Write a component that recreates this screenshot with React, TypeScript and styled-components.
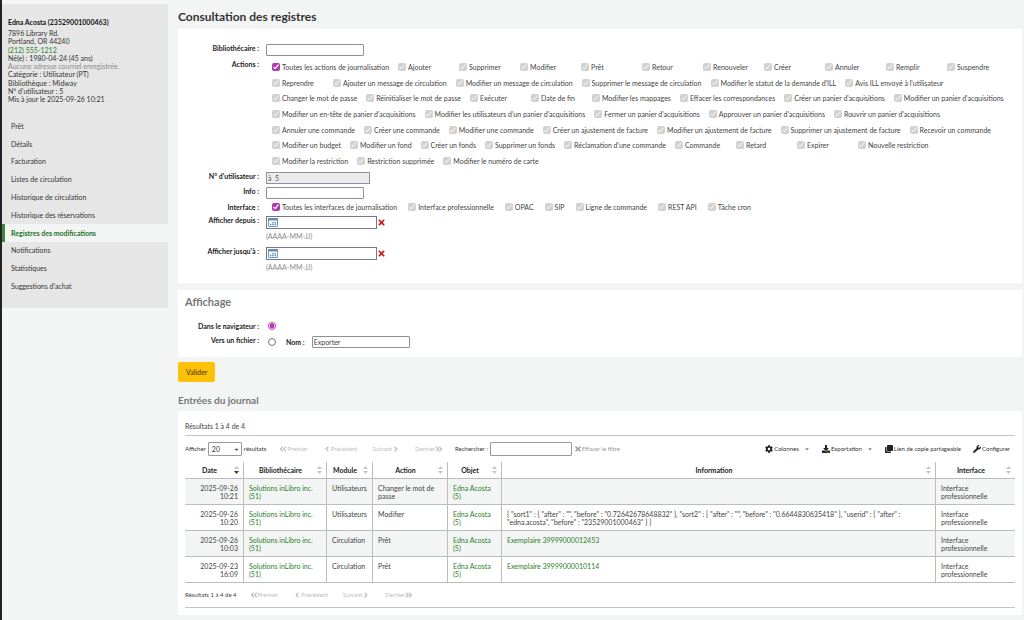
import React from 'react';
import styled, { createGlobalStyle } from 'styled-components';
import {
  FaAngleDoubleLeft,
  FaAngleDoubleRight,
  FaAngleLeft,
  FaAngleRight,
  FaCaretDown,
  FaClone,
  FaCog,
  FaDownload,
  FaTimes,
  FaWrench,
} from 'react-icons/fa';

const GlobalStyle = createGlobalStyle`
  *, *::before, *::after { box-sizing: border-box; }
  body {
    margin: 0;
    background: #f3f4f4;
    color: #444;
    font-family: Lato, "Noto Sans", sans-serif;
    font-size: 7px;
    line-height: 8px;
  }
  input, select, button { font: inherit; color: inherit; margin: 0; }
  a { color: #2a7f2a; text-decoration: none; }
  h1, h2, p, ul { margin: 0; padding: 0; }
  ul { list-style: none; }
`;

const Page = styled.div`
  display: flex;
  align-items: flex-start;
  min-height: 100vh;
  padding: 4px 2px 5px 0;
  border-left: 2px solid #222;
`;

const Sidebar = styled.aside`
  flex: 0 0 166px;
  padding: 14px 0 13px;
  background: #e6e6e6;
`;

const PatronName = styled.h2`
  padding: 0 6px;
  font-size: 7px;
  line-height: 8px;
  font-weight: 700;
  color: #111;
`;

const PatronInfo = styled.ul`
  display: flex;
  flex-direction: column;
  justify-content: space-between;
  min-height: 74px;
  margin: 3px 0 14px;
  padding: 0 6px;
  color: #333;
`;

const Muted = styled.li`
  color: #8c8c8c;
`;

const Nav = styled.nav`
  display: flex;
  flex-direction: column;
  min-height: 178px;
`;

const NavLink = styled.a<{ $active?: boolean }>`
  display: flex;
  flex: 1;
  align-items: center;
  padding-left: 6px;
  border-left: 3px solid ${(p) => (p.$active ? '#418940' : 'transparent')};
  background: ${(p) => (p.$active ? '#f3f4f4' : 'transparent')};
  color: ${(p) => (p.$active ? '#1a7326' : '#333')};
  font-weight: ${(p) => (p.$active ? 700 : 400)};
`;

const Main = styled.main`
  flex: 1;
  min-width: 0;
  margin-left: 10px;
`;

const PageTitle = styled.h1`
  padding: 6px 0 5px;
  font-size: 12px;
  line-height: 14px;
  font-weight: 700;
  color: #333;
`;

const SectionTitle = styled.h2`
  font-size: 10px;
  line-height: 12px;
  font-weight: 700;
  color: #777;
`;

const DisplayTitle = styled(SectionTitle)`
  padding: 0 7px 14px;
  font-size: 11px;
`;

const Panel = styled.section`
  background: #fff;
`;

const FilterPanel = styled(Panel)`
  padding: 15px 0 4px;
`;

const DisplayPanel = styled(Panel)`
  margin-top: 7px;
  padding: 6px 0 5px;
`;

const LogPanel = styled(Panel)`
  margin-top: 5px;
  padding: 11px 7px 7px;
`;

const Row = styled.div<{ $height: number }>`
  display: flex;
  align-items: flex-start;
  gap: 7px;
  min-height: ${(p) => p.$height}px;
`;

const RowLabel = styled.label`
  flex: 0 0 81px;
  text-align: right;
  font-weight: 700;
  color: #222;
`;

const TextInput = styled.input<{ $width?: number }>`
  width: ${(p) => p.$width ?? 98}px;
  height: 12px;
  padding: 0 1px;
  border: 1px solid #8f8f9d;
  border-radius: 1px;
  background: #fff;

  &:disabled {
    background: #ececec;
    color: #555;
    border-radius: 0;
  }
`;

const ActionRows = styled.div`
  display: flex;
  flex-direction: column;
  justify-content: space-between;
  min-height: 102px;
  margin-top: 3px;
`;

const CheckRow = styled.div`
  display: flex;
  padding-left: 6px;
`;

const CheckItem = styled.label<{ $compact?: boolean }>`
  display: flex;
  align-items: center;
  gap: 2px;
  height: 8px;
  min-width: ${(p) => (p.$compact ? 0 : 61)}px;
  padding-right: ${(p) => (p.$compact ? 11 : 9)}px;
  white-space: nowrap;
`;

const CheckBox = styled.input`
  flex: none;
  width: 8px;
  height: 8px;
  accent-color: #b03ab0;
`;

const DateField = styled.div`
  display: flex;
  flex-direction: column;
  gap: 3px;
`;

const DateLine = styled.div`
  display: flex;
  align-items: center;
`;

const DateBox = styled.div`
  display: flex;
  align-items: center;
  width: 111px;
  height: 13px;
  padding-left: 1px;
  border: 1px solid #777783;
  background: #fff;
`;

const BareInput = styled.input`
  flex: 1;
  min-width: 0;
  height: 10px;
  padding: 0 2px;
  border: 0;
  background: transparent;
`;

const ClearButton = styled.button`
  display: flex;
  padding: 0;
  border: 0;
  background: none;
  color: #d01c1c;
  font-size: 9px;
`;

const Hint = styled.span`
  color: #8c8c8c;
`;

const RadioLine = styled.div`
  display: flex;
  align-items: center;
  gap: 10px;
  padding-left: 2px;
`;

const Radio = styled.input`
  flex: none;
  width: 8px;
  height: 8px;
  accent-color: #b03ab0;
`;

const NameLabel = styled.label`
  display: flex;
  align-items: center;
  gap: 7px;
  font-weight: 700;
  color: #222;

  input { font-weight: 400; color: #444; }
`;

const Submit = styled.button`
  display: block;
  height: 20px;
  margin: 5px 0 12px;
  padding: 0 8px;
  border: 0;
  border-radius: 2px;
  background: #ffc107;
  color: #3a2d00;
`;

const Toolbar = styled.div`
  display: flex;
  align-items: center;
  height: 27px;
  margin-top: 5px;
  border-top: 1px solid #c4c4c4;
  font-size: 6px;
`;

const SizeLabel = styled.label`
  display: flex;
  align-items: center;
  gap: 2px;
  color: #333;
`;

const SelectWrap = styled.span`
  display: grid;
  align-items: center;

  > * { grid-area: 1 / 1; }
  svg { justify-self: end; margin-right: 2px; font-size: 7px; color: #555; pointer-events: none; }
`;

const SizeSelect = styled.select`
  appearance: none;
  width: 34px;
  height: 14px;
  padding: 0 3px;
  border: 1px solid #999;
  border-radius: 1px;
  background: #fff;
  font-size: 7px;
`;

const Pager = styled.div`
  display: flex;
  gap: 15px;
  margin-left: 13px;
`;

const PageButton = styled.button`
  display: flex;
  align-items: center;
  padding: 0;
  border: 0;
  background: none;
  color: #bdbdbd;

  svg { font-size: 8px; }
`;

const SearchLabel = styled.label`
  display: flex;
  align-items: center;
  gap: 2px;
  margin-left: 12px;
  color: #333;
`;

const SearchInput = styled.input`
  width: 82px;
  height: 14px;
  padding: 0 2px;
  border: 1px solid #999;
  border-radius: 1px;
`;

const ClearFilter = styled(PageButton)`
  margin-left: 2px;
  color: #999;
`;

const Tools = styled.div`
  display: flex;
  gap: 12px;
  margin-left: auto;
  padding-right: 5px;
`;

const ToolButton = styled.button`
  display: flex;
  align-items: center;
  gap: 1px;
  padding: 0;
  border: 0;
  background: none;
  color: #333;

  > svg { font-size: 8px; color: #222; }
`;

const ToolCaret = styled.span`
  display: flex;
  margin-left: 4px;

  svg { font-size: 6px; color: #888; }
`;

const LogTable = styled.table`
  width: 100%;
  table-layout: fixed;
  border-collapse: separate;
  border-spacing: 0;

  th, td {
    border-bottom: 1px solid #bcbcbc;
    border-right: 1px solid #bcbcbc;
  }
  th:last-child, td:last-child { border-right: 0; }
  tbody tr:nth-child(odd) { background: #f3f4f4; }
`;

const Col = styled.col<{ $width?: number }>`
  width: ${(p) => (p.$width ? `${p.$width}px` : 'auto')};
`;

const Th = styled.th`
  height: 17px;
  padding: 0 4px 0 0;
  color: #222;
  font-weight: 700;
`;

const ThInner = styled.div`
  display: flex;
  align-items: center;

  span { flex: 1; text-align: center; }
`;

const Td = styled.td<{ $align?: 'right' }>`
  height: 26px;
  padding: 5px 5px 4px;
  vertical-align: top;
  text-align: ${(p) => p.$align ?? 'left'};
`;

const Footer = styled.div`
  display: flex;
  align-items: center;
  height: 25px;
  border-bottom: 1px solid #c4c4c4;
  font-size: 6px;
`;

const ACTIONS: string[][] = [
  ['Toutes les actions de journalisation', 'Ajouter', 'Supprimer', 'Modifier', 'Prêt', 'Retour', 'Renouveler', 'Créer', 'Annuler', 'Remplir', 'Suspendre'],
  ['Reprendre', 'Ajouter un message de circulation', 'Modifier un message de circulation', 'Supprimer le message de circulation', "Modifier le statut de la demande d'ILL", "Avis ILL envoyé à l'utilisateur"],
  ['Changer le mot de passe', 'Réinitialiser le mot de passe', 'Exécuter', 'Date de fin', 'Modifier les mappages', 'Effacer les correspondances', "Créer un panier d'acquisitions", "Modifier un panier d'acquisitions"],
  ["Modifier un en-tête de panier d'acquisitions", "Modifier les utilisateurs d'un panier d'acquisitions", "Fermer un panier d'acquisitions", "Approuver un panier d'acquisitions", "Rouvrir un panier d'acquisitions"],
  ['Annuler une commande', 'Créer une commande', 'Modifier une commande', 'Créer un ajustement de facture', 'Modifier un ajustement de facture', 'Supprimer un ajustement de facture', 'Recevoir un commande'],
  ['Modifier un budget', 'Modifier un fond', 'Créer un fonds', 'Supprimer un fonds', "Réclamation d'une commande", 'Commande', 'Retard', 'Expirer', 'Nouvelle restriction'],
  ['Modifier la restriction', 'Restriction supprimée', 'Modifier le numéro de carte'],
];

const INTERFACES = ['Toutes les interfaces de journalisation', 'Interface professionnelle', 'OPAC', 'SIP', 'Ligne de commande', 'REST API', 'Tâche cron'];

const NAV = ['Prêt', 'Détails', 'Facturation', 'Listes de circulation', 'Historique de circulation', 'Historique des réservations', 'Registres des modifications', 'Notifications', 'Statistiques', "Suggestions d'achat"];

const COLUMNS: { name: string; width?: number }[] = [
  { name: 'Date', width: 59 },
  { name: 'Bibliothécaire', width: 83 },
  { name: 'Module', width: 46 },
  { name: 'Action', width: 75 },
  { name: 'Objet', width: 54 },
  { name: 'Information' },
  { name: 'Interface', width: 79 },
];

const ENTRIES: { day: string; time: string; module: string; action: string; item?: string; info?: string[] }[] = [
  { day: '2025-09-26', time: '10:21', module: 'Utilisateurs', action: 'Changer le mot de passe' },
  {
    day: '2025-09-26',
    time: '10:20',
    module: 'Utilisateurs',
    action: 'Modifier',
    info: [
      '{ "sort1" : { "after" : "", "before" : "0.72642678648832" }, "sort2" : { "after" : "", "before" : "0.6644830635418" }, "userid" : { "after" :',
      '"edna.acosta", "before" : "23529001000463" } }',
    ],
  },
  { day: '2025-09-26', time: '10:03', module: 'Circulation', action: 'Prêt', item: 'Exemplaire 39999000012453' },
  { day: '2025-09-23', time: '16:09', module: 'Circulation', action: 'Prêt', item: 'Exemplaire 39999000010114' },
];

function SortMark({ active }: { active?: boolean }) {
  return (
    <svg width="5" height="8" viewBox="0 0 5 8" aria-hidden="true">
      <path d="M0 3L2.5 0L5 3Z" fill="#c6c6c6" />
      <path d="M0 5L2.5 8L5 5Z" fill={active ? '#0f5c0f' : '#c6c6c6'} />
    </svg>
  );
}

function CalendarIcon() {
  return (
    <svg width="10" height="9" viewBox="0 0 10 9" aria-hidden="true">
      <rect x="0.5" y="0.5" width="9" height="8" rx="0.5" fill="#fff" stroke="#6f9ac0" />
      <rect x="0" y="0" width="10" height="2.5" fill="#5f8db5" />
      <path d="M2 5.8h1.3v1.4H2zM4.3 4h1.3v1.3H4.3zM4.3 5.8h1.3v1.4H4.3zM6.6 4h1.3v1.3H6.6zM6.6 5.8h1.3v1.4H6.6z" fill="#4a7aa5" />
    </svg>
  );
}

function Checks({ items, compact }: { items: string[]; compact?: boolean }) {
  return (
    <CheckRow>
      {items.map((text) => (
        <CheckItem key={text} $compact={compact}>
          <CheckBox type="checkbox" defaultChecked disabled={!text.startsWith('Toutes')} />
          {text}
        </CheckItem>
      ))}
    </CheckRow>
  );
}

function DateInput({ id }: { id: string }) {
  return (
    <DateField>
      <DateLine>
        <DateBox>
          <CalendarIcon />
          <BareInput id={id} type="text" />
        </DateBox>
        <ClearButton type="button" aria-label="Effacer la date">
          <FaTimes />
        </ClearButton>
      </DateLine>
      <Hint>(AAAA-MM-JJ)</Hint>
    </DateField>
  );
}

function Pagination() {
  return (
    <Pager>
      <PageButton type="button"><FaAngleDoubleLeft />Premier</PageButton>
      <PageButton type="button"><FaAngleLeft />Précédent</PageButton>
      <PageButton type="button">Suivant<FaAngleRight /></PageButton>
      <PageButton type="button">Dernier<FaAngleDoubleRight /></PageButton>
    </Pager>
  );
}

export default function App() {
  return (
    <>
      <GlobalStyle />
      <Page>
        <Sidebar>
          <PatronName>Edna Acosta (23529001000463)</PatronName>
          <PatronInfo>
            <li>7896 Library Rd.</li>
            <li>Portland, OR 44240</li>
            <li><a href="tel:2125551212">(212) 555-1212</a></li>
            <li>Né(e) : 1980-04-24 (45 ans)</li>
            <Muted>Aucune adresse courriel enregistrée.</Muted>
            <li>Catégorie : Utilisateur (PT)</li>
            <li>Bibliothèque : Midway</li>
            <li>N° d'utilisateur : 5</li>
            <li>Mis à jour le 2025-09-26 10:21</li>
          </PatronInfo>
          <Nav>
            {NAV.map((name) => (
              <NavLink key={name} href="#" $active={name === 'Registres des modifications'}>
                {name}
              </NavLink>
            ))}
          </Nav>
        </Sidebar>
        <Main>
          <PageTitle>Consultation des registres</PageTitle>
          <FilterPanel>
            <Row $height={16}>
              <RowLabel htmlFor="librarian">Bibliothécaire :</RowLabel>
              <TextInput id="librarian" type="text" />
            </Row>
            <Row $height={112}>
              <RowLabel as="span">Actions :</RowLabel>
              <ActionRows>
                {ACTIONS.map((items) => (
                  <Checks key={items[0]} items={items} />
                ))}
              </ActionRows>
            </Row>
            <Row $height={15}>
              <RowLabel htmlFor="patron">N° d'utilisateur :</RowLabel>
              <TextInput id="patron" type="text" defaultValue="à  5" disabled $width={104} />
            </Row>
            <Row $height={16}>
              <RowLabel htmlFor="info">Info :</RowLabel>
              <TextInput id="info" type="text" />
            </Row>
            <Row $height={13}>
              <RowLabel as="span">Interface :</RowLabel>
              <Checks items={INTERFACES} compact />
            </Row>
            <Row $height={31}>
              <RowLabel htmlFor="from">Afficher depuis :</RowLabel>
              <DateInput id="from" />
            </Row>
            <Row $height={32}>
              <RowLabel htmlFor="to">Afficher jusqu'à :</RowLabel>
              <DateInput id="to" />
            </Row>
          </FilterPanel>
          <DisplayPanel>
            <DisplayTitle>Affichage</DisplayTitle>
            <Row $height={14}>
              <RowLabel htmlFor="browser">Dans le navigateur :</RowLabel>
              <RadioLine>
                <Radio id="browser" type="radio" name="output" defaultChecked />
              </RadioLine>
            </Row>
            <Row $height={16}>
              <RowLabel htmlFor="file">Vers un fichier :</RowLabel>
              <RadioLine>
                <Radio id="file" type="radio" name="output" />
                <NameLabel>
                  Nom :
                  <TextInput type="text" defaultValue="Exporter" />
                </NameLabel>
              </RadioLine>
            </Row>
          </DisplayPanel>
          <Submit type="button">Valider</Submit>
          <SectionTitle>Entrées du journal</SectionTitle>
          <LogPanel>
            <p>Résultats 1 à 4 de 4</p>
            <Toolbar>
              <SizeLabel>
                Afficher
                <SelectWrap>
                  <SizeSelect defaultValue="20">
                    <option>20</option>
                    <option>50</option>
                  </SizeSelect>
                  <FaCaretDown />
                </SelectWrap>
                résultats
              </SizeLabel>
              <Pagination />
              <SearchLabel>
                Rechercher :
                <SearchInput type="text" />
              </SearchLabel>
              <ClearFilter type="button"><FaTimes />Effacer le filtre</ClearFilter>
              <Tools>
                <ToolButton type="button"><FaCog />Colonnes<ToolCaret><FaCaretDown /></ToolCaret></ToolButton>
                <ToolButton type="button"><FaDownload />Exportation<ToolCaret><FaCaretDown /></ToolCaret></ToolButton>
                <ToolButton type="button"><FaClone />Lien de copie partageable</ToolButton>
                <ToolButton type="button"><FaWrench />Configurer</ToolButton>
              </Tools>
            </Toolbar>
            <LogTable>
              <colgroup>
                {COLUMNS.map((c) => <Col key={c.name} $width={c.width} />)}
              </colgroup>
              <thead>
                <tr>
                  {COLUMNS.map((c) => (
                    <Th key={c.name}>
                      <ThInner>
                        <span>{c.name}</span>
                        <SortMark active={c.name === 'Date'} />
                      </ThInner>
                    </Th>
                  ))}
                </tr>
              </thead>
              <tbody>
                {ENTRIES.map((e) => (
                  <tr key={e.time}>
                    <Td $align="right">{e.day}<br />{e.time}</Td>
                    <Td><a href="#">Solutions inLibro inc.<br />(51)</a></Td>
                    <Td>{e.module}</Td>
                    <Td>{e.action}</Td>
                    <Td><a href="#">Edna Acosta<br />(5)</a></Td>
                    <Td>
                      {e.item && <a href="#">{e.item}</a>}
                      {e.info && <>{e.info[0]}<br />{e.info[1]}</>}
                    </Td>
                    <Td>Interface professionnelle</Td>
                  </tr>
                ))}
              </tbody>
            </LogTable>
            <Footer>
              <p>Résultats 1 à 4 de 4</p>
              <Pagination />
            </Footer>
          </LogPanel>
        </Main>
      </Page>
    </>
  );
}
